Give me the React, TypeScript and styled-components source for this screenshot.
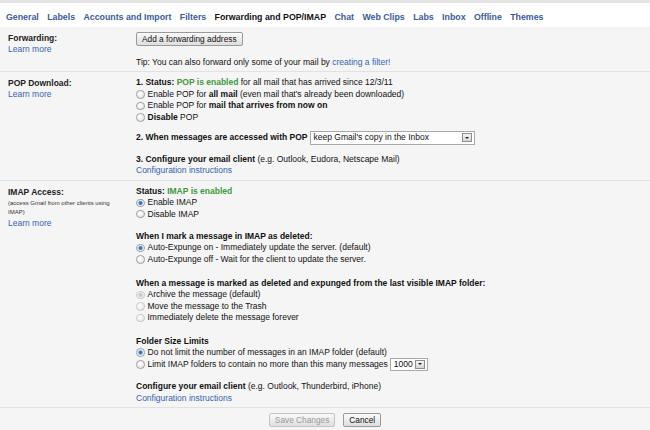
import React from "react";
import styled, { createGlobalStyle, css } from "styled-components";

const GlobalStyle = createGlobalStyle`
  html, body { margin: 0; padding: 0; }
  body {
    background: #f5f5f5;
    font-family: "Liberation Sans", Arial, sans-serif;
    font-size: 8.5px;
    color: #000;
    width: 650px;
    height: 430px;
    overflow: hidden;
  }
`;

const Page = styled.div`
  display: flex;
  flex-direction: column;
`;

const TopStripe = styled.div`
  height: 3px;
  background: #e4e4e4;
`;

const TabBar = styled.nav`
  height: 24px;
  box-sizing: border-box;
  padding: 3px 0 0 6px;
  background: #fff;
  display: flex;
  align-items: center;
  gap: 8.4px;
`;

const Tab = styled.a<{ $active?: boolean }>`
  font-size: 8.8px;
  font-weight: bold;
  color: ${(p) => (p.$active ? "#111" : "#3a5a9c")};
  text-decoration: none;
  white-space: nowrap;
`;

const Section = styled.section`
  display: grid;
  grid-template-columns: 136px 1fr;
  padding: 5px 0 3px;
  border-bottom: 1px solid #e2e2e2;
`;

const LabelCol = styled.div`
  padding: 1px 0 0 8px;
  line-height: 10px;
`;

const LabelTitle = styled.div`
  font-weight: bold;
  color: #222;
  line-height: 10.5px;
`;

const SmallNote = styled.div`
  font-size: 6px;
  color: #333;
  line-height: 9px;
  margin: 2px 0 1px;
`;

const Link = styled.a`
  color: #3464b0;
  text-decoration: none;
  cursor: pointer;
`;

const LinkLine = styled.div`
  color: #3464b0;
  line-height: 11.4px;
`;

const ContentCol = styled.div`
  line-height: 11.4px;
  color: #111;
`;

const Group = styled.div<{ $gap?: number }>`
  margin-top: ${(p) => (p.$gap ?? 0)}px;
`;

const Line = styled.div`
  white-space: nowrap;
  height: 11.4px;
  display: flex;
  align-items: center;
`;

const FieldRow = styled.div<{ $h?: number; $gap?: number }>`
  display: flex;
  align-items: center;
  white-space: nowrap;
  height: ${(p) => p.$h ?? 14}px;
  margin-top: ${(p) => p.$gap ?? 0}px;
`;

const Green = styled.span`
  color: #3c9a3c;
  font-weight: bold;
`;

const B = styled.b`
  font-weight: bold;
`;

const RadioDot = styled.span<{ $checked?: boolean; $disabled?: boolean }>`
  display: inline-block;
  box-sizing: border-box;
  width: 8.5px;
  height: 8.5px;
  border-radius: 50%;
  margin-right: 3px;
  flex: none;
  border: 1px solid ${(p) => (p.$disabled ? "#c9c9c9" : "#a0a0a0")};
  background: radial-gradient(circle at 40% 35%, #ffffff 0%, #f0f0f0 50%, #d8d8d8 100%);
  ${(p) =>
    p.$checked &&
    css`
      background: radial-gradient(
          circle at 50% 50%,
          ${p.$disabled ? "#b9c6d6" : "#2f66b5"} 0,
          ${p.$disabled ? "#c6d0dc" : "#4a86d0"} 1.7px,
          ${p.$disabled ? "#eeeeee" : "#e6eef8"} 2.5px,
          #f4f4f4 100%
        );
    `}
`;

const Radio: React.FC<{ checked?: boolean; disabled?: boolean; children: React.ReactNode }> = ({
  checked,
  disabled,
  children,
}) => (
  <Line>
    <RadioDot $checked={checked} $disabled={disabled} />
    <span>{children}</span>
  </Line>
);

const Button = styled.button<{ $disabled?: boolean }>`
  font-family: "Liberation Sans", Arial, sans-serif;
  font-size: 8.3px;
  height: 14px;
  line-height: 12px;
  padding: 0 5px;
  border-radius: 2px;
  border: 1px solid ${(p) => (p.$disabled ? "#c4c4c4" : "#9a9a9a")};
  background: linear-gradient(#fafafa, #dedede);
  color: ${(p) => (p.$disabled ? "#9a9a9a" : "#111")};
  cursor: default;
  white-space: nowrap;
`;

const SelectBox = styled.div<{ $w: number; $h: number }>`
  display: flex;
  align-items: center;
  justify-content: space-between;
  box-sizing: border-box;
  width: ${(p) => p.$w}px;
  height: ${(p) => p.$h}px;
  margin-left: 2px;
  padding: 0 2px 0 3px;
  background: #fff;
  border: 1px solid #a9a9a9;
  color: #111;
`;

const SelectArrow = styled.span`
  display: flex;
  align-items: center;
  justify-content: center;
  box-sizing: border-box;
  width: 10px;
  height: 9px;
  border: 1px solid #8f8f8f;
  background: linear-gradient(#f4f4f4, #d6d6d6);
  &::after {
    content: "";
    border-left: 2px solid transparent;
    border-right: 2px solid transparent;
    border-top: 2.5px solid #222;
  }
`;

const Select: React.FC<{ w: number; h: number; value: string }> = ({ w, h, value }) => (
  <SelectBox $w={w} $h={h}>
    <span>{value}</span>
    <SelectArrow />
  </SelectBox>
);

const Footer = styled.div`
  display: flex;
  justify-content: center;
  gap: 8px;
  padding-top: 5px;
`;

const tabs = [
  "General",
  "Labels",
  "Accounts and Import",
  "Filters",
  "Forwarding and POP/IMAP",
  "Chat",
  "Web Clips",
  "Labs",
  "Inbox",
  "Offline",
  "Themes",
];

export default function App() {
  return (
    <>
      <GlobalStyle />
      <Page>
        <TopStripe />
        <TabBar>
          {tabs.map((t) => (
            <Tab key={t} $active={t === "Forwarding and POP/IMAP"}>
              {t}
            </Tab>
          ))}
        </TabBar>

        <Section>
          <LabelCol>
            <LabelTitle>Forwarding:</LabelTitle>
            <Link>Learn more</Link>
          </LabelCol>
          <ContentCol>
            <FieldRow $h={14}>
              <Button>Add a forwarding address</Button>
            </FieldRow>
            <Group $gap={11}>
              <Line>
                <span>
                  Tip: You can also forward only some of your mail by <Link>creating a filter!</Link>
                </span>
              </Line>
            </Group>
          </ContentCol>
        </Section>

        <Section>
          <LabelCol>
            <LabelTitle>POP Download:</LabelTitle>
            <Link>Learn more</Link>
          </LabelCol>
          <ContentCol>
            <Line>
              <span>
                <B>1. Status: </B>
                <Green>POP is enabled</Green> for all mail that has arrived since 12/3/11
              </span>
            </Line>
            <Radio>
              Enable POP for <B>all mail</B> (even mail that's already been downloaded)
            </Radio>
            <Radio>
              Enable POP for <B>mail that arrives from now on</B>
            </Radio>
            <Radio>
              <B>Disable</B> POP
            </Radio>
            <FieldRow $h={14} $gap={8}>
              <B>2. When messages are accessed with POP</B>
              <Select w={165} h={14} value="keep Gmail's copy in the Inbox" />
            </FieldRow>
            <Group $gap={9}>
              <Line>
                <span>
                  <B>3. Configure your email client</B> (e.g. Outlook, Eudora, Netscape Mail)
                </span>
              </Line>
              <LinkLine>Configuration instructions</LinkLine>
            </Group>
          </ContentCol>
        </Section>

        <Section>
          <LabelCol>
            <LabelTitle>IMAP Access:</LabelTitle>
            <SmallNote>
              (access Gmail from other clients using
              <br />
              IMAP)
            </SmallNote>
            <Link>Learn more</Link>
          </LabelCol>
          <ContentCol>
            <Line>
              <span>
                <B>Status: </B>
                <Green>IMAP is enabled</Green>
              </span>
            </Line>
            <Radio checked>Enable IMAP</Radio>
            <Radio>Disable IMAP</Radio>

            <Group $gap={11}>
              <Line>
                <B>When I mark a message in IMAP as deleted:</B>
              </Line>
              <Radio checked>Auto-Expunge on - Immediately update the server. (default)</Radio>
              <Radio>Auto-Expunge off - Wait for the client to update the server.</Radio>
            </Group>

            <Group $gap={13}>
              <Line>
                <B>When a message is marked as deleted and expunged from the last visible IMAP folder:</B>
              </Line>
              <Radio checked disabled>
                Archive the message (default)
              </Radio>
              <Radio disabled>Move the message to the Trash</Radio>
              <Radio disabled>Immediately delete the message forever</Radio>
            </Group>

            <Group $gap={12}>
              <Line>
                <B>Folder Size Limits</B>
              </Line>
              <Radio checked>Do not limit the number of messages in an IMAP folder (default)</Radio>
              <FieldRow $h={12}>
                <RadioDot />
                <span>Limit IMAP folders to contain no more than this many messages</span>
                <Select w={38} h={13} value="1000" />
              </FieldRow>
            </Group>

            <Group $gap={11}>
              <Line>
                <span>
                  <B>Configure your email client</B> (e.g. Outlook, Thunderbird, iPhone)
                </span>
              </Line>
              <LinkLine>Configuration instructions</LinkLine>
            </Group>
          </ContentCol>
        </Section>

        <Footer>
          <Button $disabled>Save Changes</Button>
          <Button>Cancel</Button>
        </Footer>
      </Page>
    </>
  );
}
